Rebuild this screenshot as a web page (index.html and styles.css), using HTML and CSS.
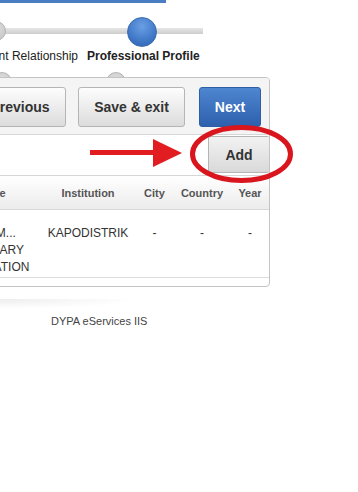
FILE: index.html
```html
<!DOCTYPE html>
<html lang="en">
<head>
  <meta charset="UTF-8">
  <title>DYPA eServices</title>
  <link rel="stylesheet" href="styles.css">
</head>
<body>
  <div class="topbar"></div>
  <div class="shell">
    <div class="steps-track">
      <span class="dot"></span>
      <span class="dot dot-active"></span>
    </div>
    <div class="step-labels">
      <span class="step-label prev">Employment Relationship</span>
      <span class="step-label current">Professional Profile</span>
    </div>
    <div class="steps-next">
      <span class="dot"></span>
      <span class="dot"></span>
    </div>

    <div class="panel">
      <div class="actions">
        <button class="btn btn-prev">Previous</button>
        <button class="btn btn-save">Save &amp; exit</button>
        <button class="btn btn-primary">Next</button>
      </div>
      <div class="add-bar">
        <button class="btn btn-add">Add</button>
      </div>
      <table class="grid">
        <colgroup>
          <col class="c-title">
          <col class="c-inst">
          <col class="c-city">
          <col class="c-country">
          <col class="c-year">
        </colgroup>
        <thead>
          <tr>
            <th class="t-title">Title</th>
            <th>Institution</th>
            <th>City</th>
            <th>Country</th>
            <th>Year</th>
          </tr>
        </thead>
        <tbody>
          <tr>
            <td class="t-title">ELEM...<br>TERTIARY<br>EDUCATION</td>
            <td>KAPODISTRIK</td>
            <td>-</td>
            <td>-</td>
            <td>-</td>
          </tr>
        </tbody>
      </table>
    </div>

    <div class="footer">
      <div class="footer-shade"></div>
      <div class="footer-text">DYPA eServices IIS</div>
    </div>
  </div>

  <!-- callout drawn over the screenshot -->
  <svg class="callout" width="358" height="492" viewBox="0 0 358 492">
    <line x1="90" y1="152.5" x2="158" y2="152.5" stroke="#e21d22" stroke-width="5"/>
    <polygon points="153,139 182,153 153,167" fill="#e21d22"/>
    <ellipse cx="241.5" cy="154" rx="49" ry="26.5" fill="none" stroke="#d9161d" stroke-width="5"/>
  </svg>
</body>
</html>
```

FILE: styles.css
```css
body {
  margin: 0;
  background: #fff;
  font-family: 'Liberation Sans', Arial, sans-serif;
  overflow: hidden;
  position: relative;
  width: 358px;
  height: 492px;
}
.topbar {
  width: 166px;
  height: 3px;
  background: #4a7dc2;
}
.shell {
  margin-left: -100px;
  width: 370px;
}
.steps-track {
  margin-top: 13px;
  width: 303px;
  height: 30px;
  box-sizing: border-box;
  padding-left: 86px;
  display: flex;
  align-items: center;
  gap: 121px;
  background: linear-gradient(#e6e6e6, #cdcdcd) no-repeat 0 52% / 100% 6px;
}
.dot {
  flex: none;
  width: 20px;
  height: 20px;
  border-radius: 50%;
  box-sizing: border-box;
  border: 1px solid #b4b4b4;
  background: radial-gradient(circle at 50% 35%, #dedede, #c2c2c2);
}
.dot-active {
  width: 30px;
  height: 30px;
  margin-top: 1px;
  border-color: #3b6cb0;
  background: radial-gradient(circle at 50% 30%, #6a9fe4, #3a72c2 70%, #2f62ad);
}
.step-labels {
  margin-top: 3px;
  display: flex;
  gap: 9px;
  font-size: 12px;
  line-height: 15px;
  color: #222;
  white-space: nowrap;
}
.step-label.prev {
  flex: none;
  width: 170px;
  margin-left: 8px;
  text-align: right;
}
.step-label.current {
  font-weight: bold;
}
.steps-next {
  margin-top: 8px;
  height: 5px;
  overflow: hidden;
  display: flex;
  padding-left: 92px;
  gap: 94px;
}
.panel {
  border: 1px solid #c4c4c4;
  border-radius: 4px;
  background: #fff;
  padding-bottom: 8px;
  overflow: hidden;
}
.actions {
  display: flex;
  justify-content: flex-end;
  padding: 9px 8px 7px;
  background: #f4f4f4;
  border-bottom: 1px solid #d6d6d6;
}
.btn {
  height: 40px;
  font-family: 'Liberation Sans', Arial, sans-serif;
  font-size: 14px;
  font-weight: bold;
  color: #333;
  border: 1px solid #b5b5b5;
  border-radius: 3px;
  background: linear-gradient(#fdfdfd, #dcdcdc);
  padding: 0;
}
.btn-prev { width: 92px; }
.btn-save { width: 107px; margin-left: 12px; }
.btn-primary {
  width: 62px;
  margin-left: 14px;
  color: #fff;
  border-color: #2d5ea6;
  background: linear-gradient(#4f86d0, #2d60ad);
}
.add-bar {
  display: flex;
  justify-content: flex-end;
  padding-top: 1px;
  height: 39px;
  border-bottom: 1px solid #d6d6d6;
}
.btn-add {
  width: 61px;
  height: 37px;
  border-radius: 2px;
  border-right: none;
  background: linear-gradient(#f2f2f2, #d9d9d9);
}
.grid {
  width: 100%;
  border-collapse: collapse;
  table-layout: fixed;
}
.c-title { width: 139px; }
.c-inst { width: 96px; }
.c-city { width: 37px; }
.c-country { width: 58px; }
.c-year { width: 38px; }
.grid th {
  height: 33px;
  padding: 0;
  font-size: 11px;
  font-weight: bold;
  color: #555;
  text-align: center;
  white-space: nowrap;
  background: linear-gradient(#fff, #ececec);
  border-bottom: 1px solid #d8d8d8;
}
.grid td {
  height: 68px;
  box-sizing: border-box;
  padding: 15px 0 0;
  vertical-align: top;
  font-size: 12px;
  line-height: 17px;
  color: #333;
  text-align: center;
  white-space: nowrap;
  border-bottom: 1px solid #dcdcdc;
}
.grid .t-title {
  padding-left: 48px;
}
.footer {
  margin-top: 12px;
}
.footer-shade {
  width: 240px;
  height: 10px;
  background: radial-gradient(ellipse at 40% 0%, rgba(0,0,0,0.07), rgba(0,0,0,0) 70%);
}
.footer-text {
  margin-top: 5px;
  padding-left: 151px;
  font-size: 11px;
  line-height: 14px;
  color: #444;
}
.callout {
  position: absolute;
  top: 0;
  left: 0;
  pointer-events: none;
}
```
